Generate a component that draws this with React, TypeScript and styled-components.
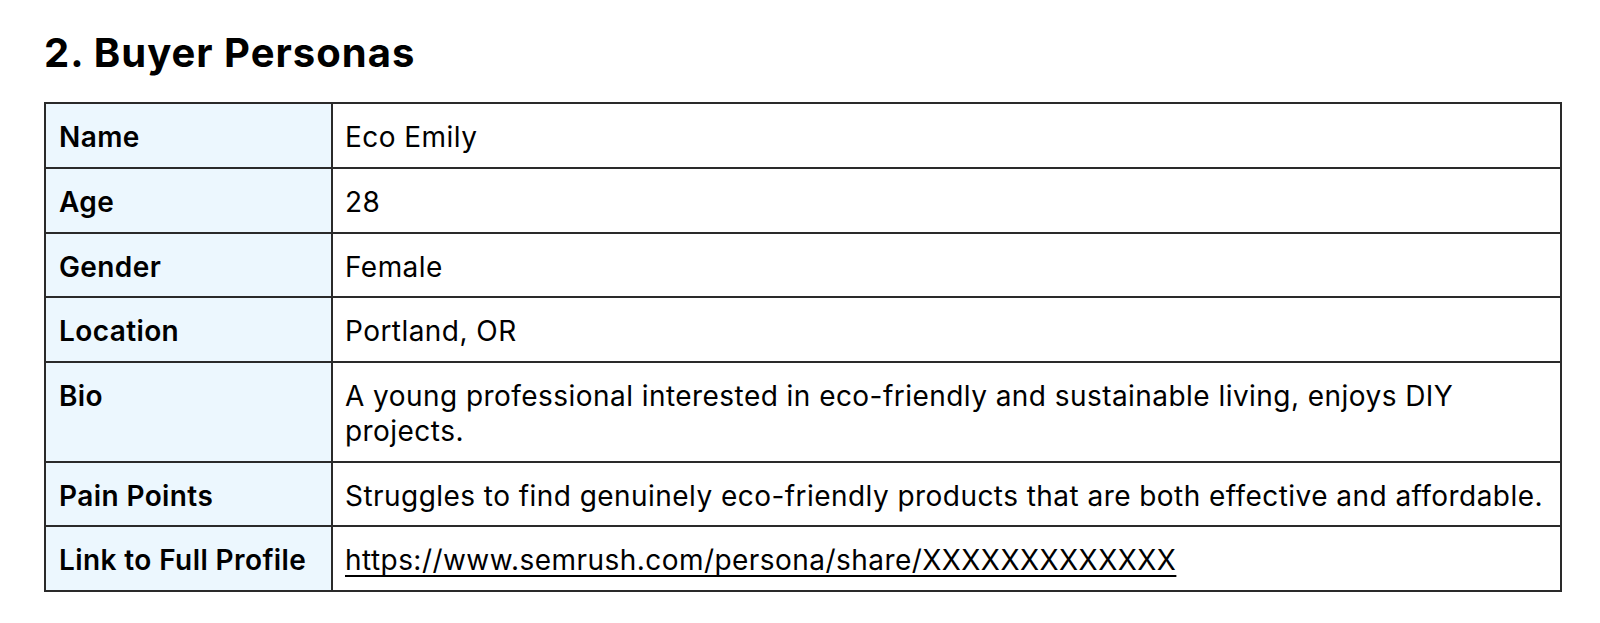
import React from "react";
import styled, { createGlobalStyle } from "styled-components";

const GlobalStyle = createGlobalStyle`
  html, body {
    margin: 0;
    padding: 0;
    background: #ffffff;
  }
  body {
    font-family: Inter, "Noto Sans", "Liberation Sans", sans-serif;
    color: #000000;
  }
`;

const Page = styled.main`
  padding: 29px 38px 0 44px;
`;

const Heading = styled.h2`
  margin: 0 0 25px 0;
  font-size: 40px;
  line-height: 48px;
  font-weight: 700;
  letter-spacing: 1px;
  color: #000;
`;

const Table = styled.table`
  width: 100%;
  border-collapse: collapse;
  table-layout: fixed;
  border: 2px solid #2a2a2a;
`;

const LabelCol = styled.col`
  width: 287px;
`;

const Label = styled.th`
  background: #ecf7fe;
  border: 2px solid #2a2a2a;
  padding: 16px 14px 12px 13px;
  text-align: left;
  vertical-align: top;
  font-size: 28px;
  line-height: 34.75px;
  font-weight: 600;
  letter-spacing: 0.4px;
`;

const Value = styled.td`
  border: 2px solid #2a2a2a;
  padding: 16px 14px 12px 12px;
  vertical-align: top;
  font-size: 28px;
  line-height: 34.75px;
  font-weight: 400;
  letter-spacing: 0.45px;
`;

const Link = styled.a`
  color: #000;
  text-decoration: underline;
  text-underline-offset: 5px;
  text-decoration-thickness: 1.5px;
`;

const rows: { label: string; value: React.ReactNode }[] = [
  { label: "Name", value: "Eco Emily" },
  { label: "Age", value: "28" },
  { label: "Gender", value: "Female" },
  { label: "Location", value: "Portland, OR" },
  {
    label: "Bio",
    value:
      "A young professional interested in eco-friendly and sustainable living, enjoys DIY projects.",
  },
  {
    label: "Pain Points",
    value:
      "Struggles to find genuinely eco-friendly products that are both effective and affordable.",
  },
  {
    label: "Link to Full Profile",
    value: (
      <Link href="#">https://www.semrush.com/persona/share/XXXXXXXXXXXXX</Link>
    ),
  },
];

export default function App() {
  return (
    <>
      <GlobalStyle />
      <Page>
        <Heading>2. Buyer Personas</Heading>
        <Table>
          <colgroup>
            <LabelCol />
            <col />
          </colgroup>
          <tbody>
            {rows.map((r) => (
              <tr key={r.label}>
                <Label scope="row">{r.label}</Label>
                <Value>{r.value}</Value>
              </tr>
            ))}
          </tbody>
        </Table>
      </Page>
    </>
  );
}
